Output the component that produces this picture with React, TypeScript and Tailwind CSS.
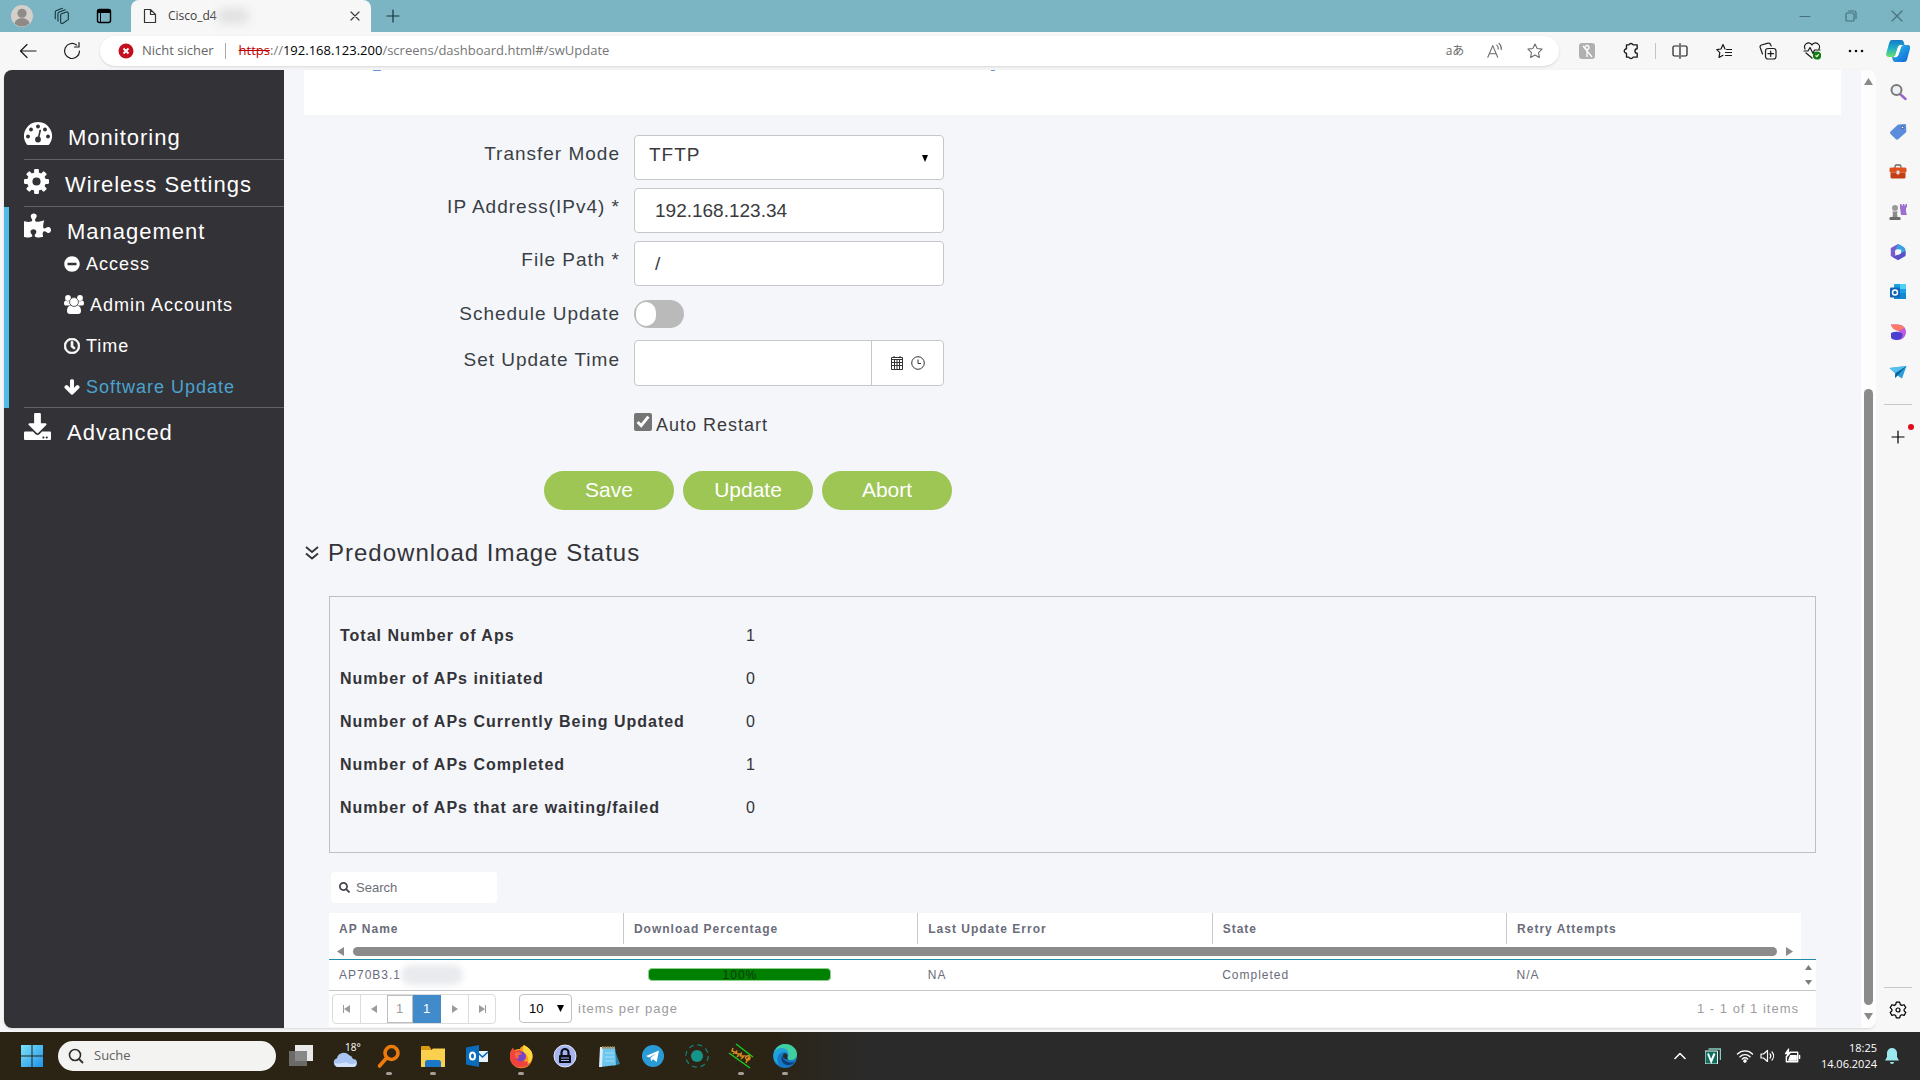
import React from "react";
import {
  FaArrowDown,
  FaDownload,
  FaMinusCircle,
  FaPuzzlePiece,
  FaRegClock,
  FaSearch,
} from "react-icons/fa";

const UI = "font-['Open_Sans','Noto_Sans_CJK_JP',sans-serif]";

type Box = { children: React.ReactNode; className?: string; view?: string };

function Svg({ children, className = "size-6", view = "0 0 24 24" }: Box) {
  return (
    <svg viewBox={view} className={className} fill="none" aria-hidden="true">
      {children}
    </svg>
  );
}

function Line({ children, className = "size-5", view = "0 0 20 20" }: Box) {
  return (
    <svg
      viewBox={view}
      className={className}
      fill="none"
      stroke="currentColor"
      strokeWidth="1.2"
      strokeLinecap="round"
      strokeLinejoin="round"
      aria-hidden="true"
    >
      {children}
    </svg>
  );
}

/* ---------- Browser title bar ---------- */

function TitleBar() {
  return (
    <header className={`${UI} flex h-8 shrink-0 items-stretch bg-[#7bb5c4] text-xs`}>
      <div className="flex w-[131px] shrink-0 items-center pl-[11px] text-[#16323a]">
        <button aria-label="Profil" className="w-[22px]">
          <Svg className="size-[22px]">
            <circle cx="12" cy="12" r="12" fill="#d3cfcb" />
            <circle cx="12" cy="9" r="5" fill="#8f8a87" />
            <path d="M4 20.500c0-8 16-8 16 0A12 12 0 0 1 4 20.500z" fill="#8f8a87" />
          </Svg>
        </button>
        <button aria-label="Arbeitsbereiche" className="ml-5">
          <Line className="size-[18px]">
            <path d="M9.500 7.500 15 5.500a1.500 1.500 0 0 1 2 1.500v7l-6 4a1.500 1.500 0 0 1-2.500-1.500V9a1.500 1.500 0 0 1 1-1.500z" />
            <path d="M5.500 15.500V7.500A2 2 0 0 1 7 5.500L13.500 3M2.500 13V6A2 2 0 0 1 4 4l6.500-2.500" />
          </Line>
        </button>
        <button aria-label="Tabaktionen" className="ml-6 text-black">
          <Svg className="size-[18px]" view="0 0 18 18">
            <rect x="2.500" y="2.500" width="13" height="13" rx="2" stroke="currentColor" strokeWidth="1.400" />
            <path d="M2 4.500A2.500 2.500 0 0 1 4.500 2h9A2.500 2.500 0 0 1 16 4.500V6H2z" fill="currentColor" />
            <path d="M5.500 6v9" stroke="currentColor" />
          </Svg>
        </button>
      </div>
      <div className="flex w-60 items-center rounded-t-lg bg-[#f7f7f7] pl-[11px] pr-[10px] text-[#3c3c3c]">
        <Line className="size-4 text-[#333]" view="0 0 16 16">
          <path d="M2.500 1.500h6l5 5v8h-11zM8.500 1.500v5h5" />
        </Line>
        <span className="ml-[10px]">Cisco_d4</span>
        <span className="h-4 w-8 rounded-full bg-[#e2e2e2] blur-[4px]" />
        <button aria-label="Tab schließen" className="ml-auto">
          <Line className="size-3" view="0 0 12 12">
            <path d="m2 2 8 8M10 2l-8 8" />
          </Line>
        </button>
      </div>
      <button aria-label="Neuer Tab" className="ml-3 text-[#16323a]">
        <Line className="size-5">
          <path d="M10 4v12M4 10h12" />
        </Line>
      </button>
      <div className="ml-auto flex text-[#47727d]">
        <button aria-label="Minimieren" className="grid w-[46px] place-items-center">
          <Line className="size-3" view="0 0 12 12"><path d="M1 6.500h10" /></Line>
        </button>
        <button aria-label="Wiederherstellen" className="grid w-[46px] place-items-center">
          <Line className="size-3" view="0 0 12 12">
            <rect x="1" y="3" width="8" height="8" rx="1" />
            <path d="M3.500 1H9a2 2 0 0 1 2 2v5.500" />
          </Line>
        </button>
        <button aria-label="Schließen" className="grid w-[46px] place-items-center">
          <Line className="size-3" view="0 0 12 12"><path d="m1 1 10 10M11 1 1 11" /></Line>
        </button>
      </div>
    </header>
  );
}

/* ---------- Address bar ---------- */

const STAR = "M10 2.200l2.400 5 5.500.7-4 3.800 1 5.500-4.900-2.700-4.900 2.700 1-5.500-4-3.800 5.500-.7z";

function CopilotIcon() {
  return (
    <Svg className="size-6">
      <defs>
        <linearGradient id="cpA" x1="0" y1="0" x2="0" y2="1">
          <stop offset="0" stopColor="#1478c8" />
          <stop offset=".5" stopColor="#1fb0c8" />
          <stop offset="1" stopColor="#6fe06a" />
        </linearGradient>
        <linearGradient id="cpB" x1="0" y1="0" x2="1" y2="1">
          <stop offset="0" stopColor="#2fc3e8" />
          <stop offset="1" stopColor="#0f62d8" />
        </linearGradient>
      </defs>
      <path d="M6 1h9c2 0 2.500 1 3 3l.5 2H15c-2 0-2.500 1-3 3l-1.500 5c-.8 3-1.500 4-4 4H3c-3 0-3.200-2-2.500-4.500L3 4.500C3.800 2 4.500 1 6 1z" fill="url(#cpA)" />
      <path d="M18 23H9.500c-2 0-2.500-1-3-3L6 18h3.500c2 0 2.500-1 3-3L14 10c.8-3 1.500-4 4-4h3.500c3 0 2.800 2 2.300 4.500L21.500 19c-.8 3-1.500 4-3.500 4z" fill="url(#cpB)" />
      <path d="M15 6.500c-2 0-2.500 1-3 2.500l-1.500 5c-.6 2.200-1 3.300-2 3.800 2.200 0 3.200-.8 3.800-2.800L14 10c.5-1.800.9-3 2.200-3.500z" fill="#fff" stroke="#fff" />
    </Svg>
  );
}

function AddressBar() {
  return (
    <div className={`${UI} flex h-[38px] shrink-0 items-center bg-[#f7f7f7] text-[#1b1b1b]`}>
      <button aria-label="Zurück" className="ml-[18px]">
        <Line><path d="M18 10H2.500M9 3.500 2.500 10 9 16.500" /></Line>
      </button>
      <button aria-label="Aktualisieren" className="ml-6">
        <Line><path d="M17.500 10A7.500 7.500 0 1 1 14.500 4M17 1.500V6h-4.500" /></Line>
      </button>
      <div className="ml-[18px] flex h-[30px] grow items-center rounded-full bg-white pl-[18px] pr-1 text-[13px] shadow-sm">
        <Svg className="size-4" view="0 0 16 16">
          <circle cx="8" cy="8" r="7.500" fill="#c50f1f" />
          <path d="m5.500 5.500 5 5m0-5-5 5" stroke="#fff" strokeWidth="1.800" />
        </Svg>
        <span className="ml-2 text-[#666]">Nicht sicher</span>
        <span className="ml-[11px] mr-[13px] h-4 w-px bg-[#aaa]" />
        <div className="text-[#767676]">
          <span className="text-[#c00000] line-through">https</span>://
          <span className="text-black">192.168.123.200</span>/screens/dashboard.html#/swUpdate
        </div>
        <div className="ml-auto flex items-center text-[#6b6b6b]">
          <button aria-label="Übersetzen" className="w-10 text-xs">aあ</button>
          <button aria-label="Laut vorlesen" className="grid w-10 place-items-center">
            <Line className="size-[18px]">
              <path d="M2 17 7.500 4 13 17M4 13h7M12 3.500a5 5 0 0 1 1.500 4.500M14.500 1.500a8 8 0 0 1 2.500 7" />
            </Line>
          </button>
          <button aria-label="Favorit" className="grid w-10 place-items-center">
            <Line className="size-[18px]"><path d={STAR} /></Line>
          </button>
        </div>
      </div>
      <div className="flex items-center">
        <button aria-label="Erweiterung" className="grid w-14 place-items-center">
          <Svg className="size-4" view="0 0 16 16">
            <rect width="16" height="16" rx="3" fill="#b0b0b0" />
            <circle cx="8" cy="4.500" r="2" stroke="#fff" strokeWidth="1.300" />
            <path d="M8 6.500V14M4 3l9 11" stroke="#fff" strokeWidth="1.300" />
          </Svg>
        </button>
        <button aria-label="Erweiterungen" className="grid w-8 place-items-center">
          <Line className="size-[18px]" view="0 0 16 16">
            <path d="M4 2.500h2.200a2 2 0 0 1 3.600 0H13.500V6a2 2 0 0 0 0 4v3.500H9.800a2 2 0 0 1-3.600 0H4V10a2 2 0 0 1 0-4z" />
          </Line>
        </button>
        <span className="ml-2 mr-[10px] h-4 w-px bg-[#c4c4c4]" />
        <button aria-label="Geteilter Bildschirm" className="grid w-7 place-items-center">
          <Line className="size-4" view="0 0 16 16">
            <path d="M6.500 3H2.500a1.500 1.500 0 0 0-1.500 1.500v7A1.500 1.500 0 0 0 2.500 13h4M9.500 3h4A1.500 1.500 0 0 1 15 4.500v7a1.500 1.500 0 0 1-1.500 1.500h-4M8 .7v14.600" />
          </Line>
        </button>
        <button aria-label="Favoriten" className="grid w-[60px] place-items-center">
          <Line className="size-4" view="0 0 16 16">
            <path d="M9 6 7 1.500 5 6l-4.200.6 3 3L3 14.500l4-2.200M10.500 6.500h5M9.500 9.500h6M9.500 12.500h6" />
          </Line>
        </button>
        <button aria-label="Sammlungen" className="grid w-7 place-items-center">
          <Line className="size-[18px]" view="0 0 18 18">
            <rect x="6.500" y="6.500" width="10.500" height="10.500" rx="2.500" />
            <path d="M11.700 9v5.500M9 11.700h5.500M3.500 12 1.200 5.500a2 2 0 0 1 1.300-2.500L9 1.200a2 2 0 0 1 2.500 1.300l.7 1.500" />
          </Line>
        </button>
        <button aria-label="Browser-Grundlagen" className="grid w-[60px] place-items-center">
          <Line className="size-[18px]" view="0 0 18 18">
            <path d="M2 7a4 4 0 0 1 7-4 4 4 0 0 1 7 4M1 9h4l2-3.500 3 6L11.500 8H17M3 11l6 5" />
            <circle cx="14" cy="13.500" r="3.500" fill="#107c10" stroke="#107c10" />
            <path d="m12.800 13.800 1 .8 1.600-2" stroke="#fff" />
          </Line>
        </button>
        <button aria-label="Einstellungen und mehr" className="grid w-7 place-items-center">
          <Svg className="size-4" view="0 0 16 16">
            <circle cx="2" cy="8" r="1.300" fill="#111" />
            <circle cx="8" cy="8" r="1.300" fill="#111" />
            <circle cx="14" cy="8" r="1.300" fill="#111" />
          </Svg>
        </button>
        <button aria-label="Copilot" className="ml-4 mr-[10px]"><CopilotIcon /></button>
      </div>
    </div>
  );
}

/* ---------- Browser side rail ---------- */

const RAIL: { name: string; icon: React.ReactNode }[] = [
  {
    name: "Suchen",
    icon: (
      <>
        <path d="m11 11 5.500 5" stroke="#9468c8" strokeWidth="2.500" strokeLinecap="round" />
        <circle cx="7.500" cy="7" r="5" fill="#eef1f5" stroke="#7a7a7a" strokeWidth="2" />
      </>
    ),
  },
  {
    name: "Einkaufen",
    icon: (
      <>
        <path d="M9.500 1.500 16 1a1 1 0 0 1 1 1l.3 6.500a1.500 1.500 0 0 1-.5 1L9.500 16a2 2 0 0 1-2.800 0L1.500 11a2 2 0 0 1 0-2.500L8.500 2a1.500 1.500 0 0 1 1-.5z" fill="#5b8ddc" />
        <circle cx="13.500" cy="4.500" r="1.300" fill="#fff" stroke="#2a4f96" />
      </>
    ),
  },
  {
    name: "Tools",
    icon: (
      <>
        <path d="M6 5V3.500A1.500 1.500 0 0 1 7.500 2h3A1.500 1.500 0 0 1 12 3.500V5" stroke="#666" strokeWidth="1.300" />
        <rect x=".5" y="4.500" width="17" height="5" rx="1.500" fill="#e0501e" />
        <path d="M1.500 9.500h15V14a1.500 1.500 0 0 1-1.500 1.500H3A1.500 1.500 0 0 1 1.500 14z" fill="#c43e14" />
        <rect x="7.500" y="7.500" width="3" height="4" rx="1" fill="#ddd" />
      </>
    ),
  },
  {
    name: "Spiele",
    icon: (
      <>
        <path d="M11 1h1.500v1.500h1.300V1h1.500v1.500h1.200V1H18v3l-1 1v4l1 3h-6l-1-7z" fill="#9d6fd0" />
        <circle cx="6" cy="5" r="3" fill="#9a9a9a" />
        <path d="M3 8.500h6l-1 1.500.5 4H3.500l.5-4z" fill="#8a8a8a" />
        <path d="M1.500 14h9a1 1 0 0 1 1 1v2H.5v-2a1 1 0 0 1 1-1z" fill="#6b6b6b" />
      </>
    ),
  },
  {
    name: "Microsoft 365",
    icon: (
      <>
        <path d="M9 1 1.800 5v8l4.500 2.600V7.200L12 4z" fill="#7a5bd0" />
        <path d="M9 1c4 1.500 7.500 3.500 7.500 6v5l-4.300-2V6.500L6.300 7z" fill="#3aa0e0" />
        <path d="M16.500 8v5L9 17.300 3.500 14l8.700-4z" fill="#5c50c8" />
        <circle cx="9" cy="9" r="2.800" fill="#f7f7f7" />
      </>
    ),
  },
  {
    name: "Outlook",
    icon: (
      <>
        <rect x="5" y="1" width="12" height="15" rx="1" fill="#1a9fe0" />
        <path d="M11 1h5a1 1 0 0 1 1 1v4h-6z" fill="#50d0f5" />
        <path d="M5 10h12v6H5z" fill="#1488d0" />
        <rect x="1" y="4.500" width="10" height="10" rx="1" fill="#0f66b8" />
        <circle cx="6" cy="9.500" r="2.500" stroke="#fff" strokeWidth="1.500" />
      </>
    ),
  },
  {
    name: "Designer",
    icon: (
      <>
        <path d="M2 1.500h6c6 0 9 3.500 9 7.500s-3 8-8 8c3-3 3.500-7 0-9.500C5 5.500 3 4.500 2 1.500z" fill="#c05ae0" />
        <path d="M2 1.500h6c3.500 0 6 1.500 7.500 3.500L9 8C5 7 2.500 5 2 1.500z" fill="#ff7a66" />
        <path d="M2 10c4-2 9-1.500 11 .5 1.500 2.500-1 6.500-5 6.500-3.500 0-6-1-6-3z" fill="#4a3fd0" />
      </>
    ),
  },
  {
    name: "Telegram",
    icon: (
      <>
        <path d="M.5 5 17.500 3 13 15.500l-4.500-3L6 15V10z" fill="#2a9fdc" />
        <path d="M.5 5 17.500 3 6 10z" fill="#55c0ee" />
        <path d="M17.500 3 6.500 10.500 6 15l2.500-2.500z" fill="#125e90" />
      </>
    ),
  },
];

function Rail() {
  return (
    <aside className="flex w-11 shrink-0 flex-col items-center bg-[#f7f7f7] pt-[2px]">
      {RAIL.map((r) => (
        <button key={r.name} aria-label={r.name} className="grid h-10 w-full place-items-center">
          <Svg className="size-[18px]" view="0 0 18 18">{r.icon}</Svg>
        </button>
      ))}
      <hr className="mt-3 w-7 border-[#c8c8c8]" />
      <button aria-label="Hinzufügen" className="relative mt-5 grid size-6 place-items-center text-black">
        <Line className="size-4" view="0 0 16 16"><path d="M8 2v12M2 8h12" /></Line>
        <span className="absolute -right-1 -top-[1px] size-[6px] rounded-full bg-[#e00b1c]" />
      </button>
      <hr className="mt-auto w-7 border-[#c8c8c8]" />
      <button aria-label="Einstellungen" className="mb-3 mt-3 grid place-items-center text-black">
        <Line className="size-5">
          <path d="M8.300 2.200h3.400l.6 2.400 1.500.8 2.300-.7 1.700 2.900-1.700 1.700v1.500l1.700 1.700-1.700 2.900-2.300-.7-1.500.8-.6 2.400H8.300l-.6-2.400-1.500-.8-2.300.7-1.700-2.900 1.700-1.700V9.300L2.200 7.600l1.700-2.900 2.300.7 1.500-.8z" />
          <circle cx="10" cy="10" r="2" />
        </Line>
      </button>
    </aside>
  );
}

/* ---------- Application sidebar ---------- */

function GaugeIcon() {
  const bg = "#333237";
  return (
    <svg viewBox="0 0 28 23" className="h-[23px] w-7" aria-hidden="true">
      <path d="M14 0a14 14 0 0 1 11.800 21.500c-.6 1-1.200 1.500-2 1.500H4.200c-.8 0-1.400-.5-2-1.500A14 14 0 0 1 14 0z" fill="#fff" />
      <circle cx="4" cy="14.500" r="1.900" fill={bg} />
      <circle cx="7" cy="7.500" r="1.900" fill={bg} />
      <circle cx="14" cy="4.500" r="1.900" fill={bg} />
      <circle cx="21" cy="7.500" r="1.900" fill={bg} />
      <circle cx="24" cy="14.500" r="1.900" fill={bg} />
      <path d="m16.200 8.500-2 8.500" stroke={bg} strokeWidth="1.600" strokeLinecap="round" />
      <circle cx="14" cy="17.500" r="2.900" fill={bg} />
    </svg>
  );
}

function GearIcon() {
  return (
    <svg viewBox="0 0 24 24" className="size-[25px]" aria-hidden="true" fill="#fff">
      {[0, 45, 90, 135].map((a) => (
        <rect key={a} x="9.700" y="0" width="4.600" height="24" rx="1" transform={`rotate(${a} 12 12)`} />
      ))}
      <circle cx="12" cy="12" r="9" />
      <circle cx="12" cy="12" r="3.900" fill="#333237" />
    </svg>
  );
}

function GroupIcon() {
  return (
    <svg viewBox="0 0 20 19" className="h-[19px] w-5" fill="#fff" aria-hidden="true">
      <circle cx="4" cy="3" r="2.900" />
      <circle cx="16" cy="3" r="2.900" />
      <path d="M0 8.500C0 6.500.8 5.500 1.800 5.500c1.500 1 3 1 4 .5-.5 2.500 0 3.500 1 4.500H2C.8 10.500 0 10 0 8.500zM20 8.500c0-2-.8-3-1.800-3-1.500 1-3 1-4 .5.5 2.500 0 3.500-1 4.500H18c1.200 0 2-.5 2-2z" />
      <path d="M3 16c0-3 1-5 3.500-5.500C8.500 12 11.500 12 13.500 10.500 16 11 17 13 17 16c0 2-1 3-3 3H6c-2 0-3-1-3-3z" />
      <circle cx="10" cy="7" r="4.400" stroke="#333237" strokeWidth=".6" />
    </svg>
  );
}

const SUB = [
  { label: "Access", icon: <FaMinusCircle className="size-4" /> },
  { label: "Admin Accounts", icon: <GroupIcon /> },
  { label: "Time", icon: <FaRegClock className="size-4" stroke="currentColor" strokeWidth={28} /> },
  { label: "Software Update", icon: <FaArrowDown className="size-4" stroke="currentColor" strokeWidth={50} />, active: true },
];

function NavItem({ icon, label }: { icon: React.ReactNode; label: string }) {
  return (
    <a href="#" className="flex h-[46px] items-start pt-[9px] text-[22px] leading-8">
      <span className="flex h-8 items-start">{icon}</span>
      <span className="ml-4">{label}</span>
    </a>
  );
}

function Sidebar() {
  return (
    <nav className="w-[280px] shrink-0 bg-[#333237] pt-[43px] text-white">
      <div className="ml-5 border-b border-[#626166]">
        <NavItem icon={<GaugeIcon />} label="Monitoring" />
      </div>
      <div className="ml-5 border-b border-[#626166]">
        <NavItem icon={<GearIcon />} label="Wireless Settings" />
      </div>
      <div className="border-l-[5px] border-[#4fbbe9] pl-[15px]">
        <div className="border-b border-[#626166]">
          <a href="#" className="flex h-9 items-start pt-[9px] text-[22px] leading-8">
            <FaPuzzlePiece className="-mt-1 size-[27px]" />
            <span className="ml-4">Management</span>
          </a>
          <ul className="pl-10 text-lg">
            {SUB.map((s) => (
              <li key={s.label} className="flex h-[41px] items-center">
                <a href="#" className="flex items-center gap-[6px]">
                  {s.icon}
                  <span className={s.active ? "text-[#4aa3cf]" : ""}>{s.label}</span>
                </a>
              </li>
            ))}
          </ul>
        </div>
      </div>
      <div className="ml-5">
        <NavItem icon={<FaDownload className="-mt-1 size-[27px]" />} label="Advanced" />
      </div>
    </nav>
  );
}

/* ---------- Update form ---------- */

const FIELD = "w-[310px] rounded border border-[#c5c7cb] bg-white text-[19px] text-[#3a3a3e]";
const LABEL = "w-[314px] pr-[14px] text-right text-[19px] text-[#3a3f45]";

function Triangle({ dir, className }: { dir: "up" | "down" | "left" | "right"; className: string }) {
  const d = { up: "M0 10 5 0l5 10z", down: "M0 0h10L5 10z", left: "M10 0v10L0 5z", right: "M0 0v10l10-5z" }[dir];
  return (
    <svg viewBox="0 0 10 10" preserveAspectRatio="none" className={className} fill="currentColor" aria-hidden="true">
      <path d={d} />
    </svg>
  );
}

function UpdateForm() {
  return (
    <form onSubmit={(e) => e.preventDefault()}>
      <div className="flex h-[45px] items-start">
        <label htmlFor="mode" className={`${LABEL} pt-[5px]`}>Transfer Mode</label>
        <div className="relative">
          <select id="mode" className={`${FIELD} h-[45px] appearance-none px-[14px] pb-1 tracking-[1px]`}>
            <option>TFTP</option>
          </select>
          <Triangle dir="down" className="pointer-events-none absolute right-4 top-5 h-[7px] w-[6px] text-black" />
        </div>
      </div>
      <div className="mt-2 flex items-start">
        <label htmlFor="ip" className={`${LABEL} pt-[5px]`}>IP Address(IPv4) *</label>
        <input id="ip" defaultValue="192.168.123.34" className={`${FIELD} h-[45px] px-5 tracking-normal`} />
      </div>
      <div className="mt-2 flex items-start">
        <label htmlFor="path" className={`${LABEL} pt-[5px]`}>File Path *</label>
        <input id="path" defaultValue="/" className={`${FIELD} h-[45px] px-5 tracking-normal`} />
      </div>
      <div className="mt-[14px] flex h-7 items-center">
        <label htmlFor="sched" className={LABEL}>Schedule Update</label>
        <input
          id="sched"
          type="checkbox"
          role="switch"
          className="flex h-7 w-[50px] appearance-none items-center rounded-full bg-[#bababa] px-[2px] before:block before:h-6 before:w-5 before:rounded-full before:bg-white before:content-['']"
        />
      </div>
      <div className="mt-3 flex items-start">
        <label htmlFor="time" className={`${LABEL} pt-[6px]`}>Set Update Time</label>
        <div className={`${FIELD} flex h-[46px]`}>
          <input id="time" className="min-w-0 grow rounded-l px-3" />
          <div className="flex w-[72px] shrink-0 items-center justify-center gap-2 border-l border-[#c5c7cb] text-[#333]">
            <button type="button" aria-label="Select date">
              <svg viewBox="0 0 12 14" className="h-[14px] w-3" fill="none" stroke="currentColor" aria-hidden="true">
                <path d="M.5 1.500h11v12H.5zM1 3.500h10M1 6.500h10M1 9.500h10M3.500 4v9M6 4v9M8.500 4v9M3 0v2M9 0v2" />
              </svg>
            </button>
            <button type="button" aria-label="Select time">
              <svg viewBox="0 0 14 14" className="size-[14px]" fill="none" stroke="currentColor" aria-hidden="true">
                <circle cx="7" cy="7" r="6.300" />
                <path d="M7 3.500V7.500h3" />
              </svg>
            </button>
          </div>
        </div>
      </div>
      <div className="ml-[314px] mt-[25px] flex h-7 items-center gap-1">
        <input
          id="restart"
          type="checkbox"
          defaultChecked
          className="mb-[6px] size-[18px] accent-[#757575]"
        />
        <label htmlFor="restart" className="text-lg text-[#3a3a3e]">Auto Restart</label>
      </div>
      <div className="ml-56 mt-8 flex gap-[9px] text-[21px] tracking-normal text-white">
        {["Save", "Update", "Abort"].map((b) => (
          <button key={b} type="button" className="h-[39px] w-[130px] rounded-full bg-[#9dc655] pb-[2px]">
            {b}
          </button>
        ))}
      </div>
    </form>
  );
}

/* ---------- Predownload status ---------- */

const STATS: [string, number][] = [
  ["Total Number of Aps", 1],
  ["Number of APs initiated", 0],
  ["Number of APs Currently Being Updated", 0],
  ["Number of APs Completed", 1],
  ["Number of APs that are waiting/failed", 0],
];

const COLUMNS = ["AP Name", "Download Percentage", "Last Update Error", "State", "Retry Attempts"];

function ApTable() {
  return (
    <table className="w-full table-fixed border-collapse text-left text-xs text-[#6a6c7a]">
      <colgroup>
        {COLUMNS.map((c) => <col key={c} />)}
        <col className="w-[15px]" />
      </colgroup>
      <thead>
        <tr className="h-[31px]">
          {COLUMNS.map((c, i) => (
            <th key={c} className={i ? "border-l border-[#c8c9cc] bg-white pl-[10px]" : "bg-white pl-[10px]"}>{c}</th>
          ))}
          <td />
        </tr>
        <tr className="h-[15px] border-b border-[#1f8ba6]">
          <td colSpan={5} className="bg-white">
            <div className="flex items-center gap-[9px] px-2 text-[#8b8b8b]">
              <Triangle dir="left" className="h-[9px] w-[7px]" />
              <div className="h-[9px] grow rounded-full bg-[#8b8b8b]" />
              <Triangle dir="right" className="h-[9px] w-[7px]" />
            </div>
          </td>
          <td />
        </tr>
      </thead>
      <tbody className="bg-white">
        <tr className="h-[31px] border-b border-[#c4c6c9]">
          <td className="pl-[10px]">
            <div className="flex items-center">
              AP70B3.1
              <span className="h-5 w-[62px] rounded-full bg-[#e8eaed] blur-[3px]" />
            </div>
          </td>
          <td className="pl-[25px]">
            <div className="flex h-[13px] w-[183px] items-center justify-center rounded-sm border border-[#8fce8f] bg-[#008000] text-[#0b3a0b]">
              100%
            </div>
          </td>
          <td className="pl-[10px]">NA</td>
          <td className="pl-[10px]">Completed</td>
          <td className="pl-[10px]">N/A</td>
          <td>
            <div className="flex flex-col items-center gap-[10px] text-[#7d7d7d]">
              <Triangle dir="up" className="h-[5px] w-[7px]" />
              <Triangle dir="down" className="h-[5px] w-[7px]" />
            </div>
          </td>
        </tr>
      </tbody>
    </table>
  );
}

const PAGE = "grid h-7 w-[27px] place-items-center border-[#dcdcdc]";

function Pager() {
  return (
    <div className="flex h-9 items-center bg-white pl-[3px] pr-[17px] text-[13px] text-[#9c9ca0]">
      <div className="flex overflow-hidden rounded border border-[#dcdcdc]">
        <button aria-label="First page" className={PAGE}>
          <span className="flex items-center"><i className="h-2 w-px bg-current" /><Triangle dir="left" className="h-2 w-[6px]" /></span>
        </button>
        <button aria-label="Previous page" className={`${PAGE} border-l`}>
          <Triangle dir="left" className="h-2 w-[6px]" />
        </button>
        <button className="grid h-7 w-[26px] place-items-center border border-[#bdbdbd]">1</button>
        <button className="grid h-7 w-7 place-items-center bg-[#428bca] text-white">1</button>
        <button aria-label="Next page" className={PAGE}>
          <Triangle dir="right" className="h-2 w-[6px]" />
        </button>
        <button aria-label="Last page" className={`${PAGE} border-l`}>
          <span className="flex items-center"><Triangle dir="right" className="h-2 w-[6px]" /><i className="h-2 w-px bg-current" /></span>
        </button>
      </div>
      <div className="relative ml-[23px]">
        <select id="pagesize" className="h-[29px] w-[53px] appearance-none rounded border border-[#bfc1c4] bg-white pl-[9px] text-[13px] tracking-normal text-black">
          <option>10</option>
        </select>
        <Triangle dir="down" className="pointer-events-none absolute right-2 top-[11px] h-[7px] w-[7px] text-black" />
      </div>
      <label htmlFor="pagesize" className="ml-[6px]">items per page</label>
      <span className="ml-auto">1 - 1 of 1 items</span>
    </div>
  );
}

function Main() {
  return (
    <main className="min-w-0 grow overflow-hidden bg-[#f4f6fa] pl-5 text-[#333338]">
      <div className="mr-5 h-[45px] bg-white">
        <div className="flex gap-[610px] pl-[69px]">
          <span className="h-px w-2 bg-[#6f93d8]" />
          <span className="h-px w-1 bg-[#6f93d8]" />
        </div>
      </div>
      <div className="ml-4 mt-5">
        <UpdateForm />
      </div>
      <h2 className="mt-[27px] flex h-8 items-center gap-2 text-2xl">
        <svg viewBox="0 0 16 14" className="h-[14px] w-4" fill="none" stroke="currentColor" strokeWidth="1.800" aria-hidden="true">
          <path d="m2 1 6 5 6-5M2 7.500l6 5 6-5" />
        </svg>
        Predownload Image Status
      </h2>
      <section className="ml-[25px] mr-[45px] mt-[27px]">
        <dl className="flex flex-col border border-[#bcbfc4] pb-[23px] pl-[10px] pt-[17px]">
          {STATS.map(([k, v]) => (
            <div key={k} className="flex h-[43px] items-center">
              <dt className="w-[406px] font-bold">{k}</dt>
              <dd>{v}</dd>
            </div>
          ))}
        </dl>
        <div className="ml-[2px] mt-[19px] flex h-[31px] w-[166px] items-center gap-[6px] rounded-sm bg-white px-2">
          <FaSearch className="size-[11px] shrink-0 text-[#44464f]" />
          <input aria-label="Search" placeholder="Search" className="min-w-0 grow text-[13px] tracking-normal outline-none placeholder:text-[#6b6d76]" />
        </div>
        <div className="mt-[10px]">
          <ApTable />
          <Pager />
        </div>
      </section>
    </main>
  );
}

function PageScrollbar() {
  return (
    <div className="flex w-[15px] shrink-0 flex-col items-center bg-[#fdfdfd] py-2 text-[#8a8a8a]">
      <Triangle dir="up" className="h-[7px] w-[9px]" />
      <div className="min-h-0 w-[9px] flex-[304]" />
      <div className="min-h-0 w-[9px] flex-[616] rounded-full bg-[#8b8b8b]" />
      <Triangle dir="down" className="mt-2 h-[7px] w-[9px]" />
    </div>
  );
}

/* ---------- Taskbar ---------- */

const TASKS: { name: string; icon: React.ReactNode; dot?: boolean }[] = [
  {
    name: "Aktive Anwendungen",
    icon: (
      <>
        <rect x="6" y="1" width="18" height="16" fill="#e9e9e9" />
        <rect x="0" y="7" width="18" height="15" fill="#777" fillOpacity=".85" />
      </>
    ),
  },
  {
    name: "Wetter",
    icon: (
      <>
        <path d="M5 23a4.500 4.500 0 0 1-1-8.800A7 7 0 0 1 16 11a6 6 0 0 1 4 4 4 4 0 0 1 0 8z" fill="#a9c6f2" />
        <path d="M2 19c5 2 10-2 13 0s5 1 8 0c0 2.500-1 4-3 4H5c-2 0-3-2-3-4z" fill="#d5e3fa" />
        <text x="12" y="7" fill="#fff" fontSize="10" fontFamily="Open Sans">18°</text>
      </>
    ),
  },
  {
    name: "Suche",
    dot: true,
    icon: (
      <>
        <circle cx="14.500" cy="9" r="6.500" stroke="#ef7a0c" strokeWidth="3.600" />
        <path d="m9.500 14-7 8" stroke="#ef7a0c" strokeWidth="3.600" strokeLinecap="round" />
      </>
    ),
  },
  {
    name: "Explorer",
    dot: true,
    icon: (
      <>
        <path d="M0 3a1 1 0 0 1 1-1h7l2 2.500V8H0z" fill="#d99a10" />
        <path d="M0 6h10l2-1.500h12V23H0z" fill="#fbd04e" />
        <path d="M4 23v-4.500A2.500 2.500 0 0 1 6.500 16h11a2.500 2.500 0 0 1 2.500 2.500V23z" fill="#1b78c8" />
      </>
    ),
  },
  {
    name: "Outlook",
    icon: (
      <>
        <rect x="11" y="7" width="12" height="11" fill="#e8f2fb" />
        <path d="m13 9 4.500 4L23 8" stroke="#0a66b5" strokeWidth="1.600" />
        <path d="M1 3.500 14 1v22L1 20.500z" fill="#0a6cbd" />
        <ellipse cx="7.500" cy="12" rx="2.500" ry="3.500" stroke="#fff" strokeWidth="2" />
      </>
    ),
  },
  {
    name: "Firefox",
    dot: true,
    icon: (
      <>
        <path d="M15 1c5 3 9 6 8.500 12A11.200 11.200 0 0 1 1 13C.8 9 2 6 4 4l1 2.500C7 5 9 5 11 5c0-2 2-2 4-4z" fill="#ff9a1e" />
        <path d="M1 12c0-3 1-6 3-8l1 3 6-1 3 4-4 6 9 2 3-8c3 6-2 13.500-10 13.500S1 18 1 12z" fill="#f0433f" />
        <path d="M15 1c5 3 9 6 8.500 12-1 5-3 6-5 7 2-6 0-9-3-11-2-2-2-5-.5-8z" fill="#ffd83a" />
        <circle cx="12" cy="12.500" r="5" fill="#7a43c8" />
        <path d="M6 9c3-2 5-1 7 1l-4 1.500 1 3C7 15 5 12 6 9z" fill="#f76a35" />
      </>
    ),
  },
  {
    name: "KeePass",
    icon: (
      <>
        <circle cx="12" cy="12" r="11" fill="#a5b4ee" stroke="#dfe5fb" />
        <rect x="6" y="11" width="12" height="8" rx="1" fill="#0b0d18" />
        <path d="M8.500 11V8.500a3.500 3.500 0 0 1 7 0V11" stroke="#0b0d18" strokeWidth="2.200" />
        <path d="M8 14h8M8 16.500h8" stroke="#a5b4ee" />
      </>
    ),
  },
  {
    name: "Notepad",
    icon: (
      <>
        <path d="M17 4l6 16-7 2z" fill="#2f7fa6" />
        <path d="M4 3h14l1 18-15 2z" fill="#6cc6ee" />
        <path d="M3 3h3l-1 20H2z" fill="#d9eef8" />
        <path d="M5 3.500h13" stroke="#b98344" strokeWidth="2.500" strokeDasharray="1.500 1" />
        <path d="M8 9h9M8 13h9M8 17h9" stroke="#a2dcf6" />
      </>
    ),
  },
  {
    name: "Telegram",
    icon: (
      <>
        <circle cx="12" cy="12" r="11" fill="#2a9bd6" />
        <path d="m5 12 13-5.500-2.300 11.500-3.700-2.700-2 2-.4-3.500L15 9.500l-7 4z" fill="#fff" />
      </>
    ),
  },
  {
    name: "Verbindung",
    icon: (
      <>
        <circle cx="12" cy="12" r="6" fill="#15958a" />
        <circle cx="12" cy="12" r="11.200" stroke="#15807a" strokeWidth="1.200" strokeDasharray="5 3.800" />
      </>
    ),
  },
  {
    name: "Terminal",
    dot: true,
    icon: (
      <>
        <path d="M7 0 24 13M0 9l21 15" stroke="#14d21c" strokeWidth="1.400" />
        <path d="M4 4 3 7l3 1-2 2M8 6.500l-1 3 3.500.5-2.500 3M12.500 8.500l-1 3.500 3.500 0-3 3M21 12c-4-1-5 1-4 3s4 1 4-1-1-2-4 5" stroke="#d88a1c" strokeWidth="1.500" />
      </>
    ),
  },
  {
    name: "Edge",
    dot: true,
    icon: (
      <>
        <circle cx="12" cy="12" r="12" fill="#1679c8" />
        <path d="M1 9C3 2 8 0 12 0c7 0 12 5 12 10 0 4-3 6-6 6-3 0-4-1-3-3 1-3-1-6-5-6-4 0-8 1-9 2z" fill="#3fcfa0" />
        <path d="M1 9c2-4 5-5 8-5 5 0 7 4 6.500 7C14 7 8 7 5 12c-1.500 3-.5 6 1 9C1 18-.5 13 1 9z" fill="#1fa3d8" />
        <path d="M9 12c-2 5 2 10 8 9 2-.5 4-2 5-3.500-2 1-5 1.500-8 0-3-1.300-4-3-5-5.500z" fill="#0c3f78" />
        <path d="M10 11c1-2 4-2 4.500.5 0 1.500-1 2 .5 4-3 0-6-2-5-4.500z" fill="#2a2a26" />
      </>
    ),
  },
];

function Taskbar() {
  return (
    <footer className={`${UI} flex h-12 shrink-0 items-center bg-gradient-to-r from-[#2b2313] from-40% to-[#2a2a2a] to-45% text-xs text-white`}>
      <button aria-label="Start" className="ml-5">
        <svg viewBox="0 0 24 24" className="size-6" fill="url(#win)" aria-hidden="true">
          <defs>
            <linearGradient id="win" x1="0" y1="0" x2="24" y2="24" gradientUnits="userSpaceOnUse">
              <stop stopColor="#7fe6fb" />
              <stop offset="1" stopColor="#1a8fe8" />
            </linearGradient>
          </defs>
          <path d="M1 1h10.500v10.500H1zM12.500 1H23v10.500H12.500zM1 12.500h10.500V23H1zM12.500 12.500H23V23H12.500z" />
        </svg>
      </button>
      <div className="ml-[14px] flex h-[30px] w-[218px] items-center rounded-full bg-[#f3f3f1] pl-[10px] text-[#2d2d2d]">
        <Svg className="size-4" view="0 0 16 16">
          <circle cx="7" cy="7" r="5.500" stroke="currentColor" strokeWidth="1.600" />
          <path d="m11 11 4 4" stroke="currentColor" strokeWidth="1.800" />
        </Svg>
        <input aria-label="Suche" placeholder="Suche" className="ml-[10px] min-w-0 grow text-[13px] outline-none placeholder:text-[#616161]" />
      </div>
      <div className="ml-[3px] flex h-12">
        {TASKS.map((t) => (
          <button key={t.name} aria-label={t.name} className="flex w-11 flex-col items-center pt-3">
            <Svg className="size-6 overflow-visible">{t.icon}</Svg>
            {t.dot && <span className="mt-1 h-[3px] w-[6px] rounded-full bg-[#a39f98]" />}
          </button>
        ))}
      </div>
      <div className="ml-auto flex items-center">
        <button aria-label="Ausgeblendete Symbole" className="mr-[19px]">
          <Line className="size-3" view="0 0 12 12"><path d="m1 8.500 5-5 5 5" strokeWidth="1.500" /></Line>
        </button>
        <Svg className="mr-[15px] size-4" view="0 0 16 16">
          <path d="M3.500 1h12v11" stroke="#7fd0bf" strokeWidth="1.500" />
          <path d="M0 3h12.500v13H0z" fill="#0c6e5c" stroke="#f2f2f2" />
          <path d="m3 5.500 3.200 8 3.300-8" stroke="#fff" strokeWidth="2" />
        </Svg>
        <Line className="mr-[6px] size-[18px]" view="0 0 18 18">
          <path d="M1.500 7a10.500 10.500 0 0 1 15 0M4 9.700a7 7 0 0 1 10 0M6.300 12a4 4 0 0 1 5.400 0" strokeWidth="1.400" />
          <circle cx="9" cy="14" r="1.200" fill="currentColor" />
        </Line>
        <Line className="mr-2 size-4" view="0 0 16 16">
          <path d="M1 6h2.500L7.500 2.500v11L3.500 10H1zM10 6a3 3 0 0 1 0 4M12 4a6 6 0 0 1 0 8" />
        </Line>
        <Line className="mr-[14px] size-[17px]" view="0 0 18 18">
          <path d="M7 4.500h7.500v10H2.500V9M16.500 8v3" strokeWidth="1.500" />
          <path d="M5 1 1.500 6H4L3 9l4-4.500H4.500z" fill="currentColor" />
          <path d="M5 13 7 8h6v5z" fill="currentColor" />
        </Line>
        <div className="w-[62px] text-right text-[11px] leading-4">
          <div>18:25</div>
          <div>14.06.2024</div>
        </div>
        <Svg className="ml-[7px] mr-5 size-4" view="0 0 16 16">
          <path d="M8 0a5 5 0 0 1 5 5v4l2 3.500H1L3 9V5a5 5 0 0 1 5-5zM6 14h4a2 2 0 0 1-4 0z" fill="#9be8ee" />
        </Svg>
      </div>
    </footer>
  );
}

export default function App() {
  return (
    <div className="flex h-screen flex-col overflow-hidden bg-[#f7f7f7]">
      <TitleBar />
      <AddressBar />
      <div className="flex min-h-0 grow">
        <div className="mb-1 ml-1 flex min-w-0 grow overflow-hidden rounded-lg font-['Liberation_Sans',Arial,sans-serif] tracking-[1px] shadow">
          <Sidebar />
          <Main />
          <PageScrollbar />
        </div>
        <Rail />
      </div>
      <Taskbar />
    </div>
  );
}
